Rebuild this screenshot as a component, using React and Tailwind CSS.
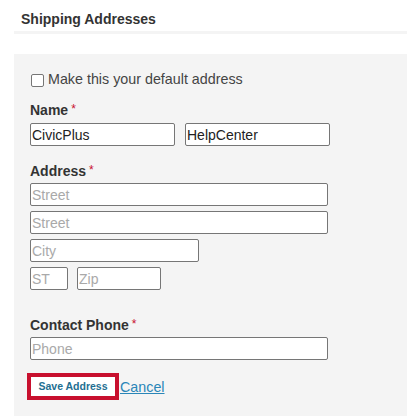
import React from "react";

const inputCls =
  "block h-[23px] rounded-[2px] border border-[#767676] bg-white px-[1px] text-[14px] leading-none text-[#222] placeholder:text-[#a9a9a9] outline-none";

function Label({ children, className = "" }) {
  return (
    <div className={`flex items-start text-[14px] leading-[16px] font-bold text-[#333] ${className}`}>
      <span>{children}</span>
      <span className="ml-[3px] text-[12px] leading-[14px] font-normal text-[#c8102e]">*</span>
    </div>
  );
}

export default function App() {
  return (
    <div
      className="w-[407px] h-[416px] overflow-hidden bg-white"
      style={{ fontFamily: '"Liberation Sans", Arial, sans-serif' }}
    >
      <div className="ml-[14px] pl-[7px] pt-[9px] pb-[2px] border-b-[3px] border-[#f4f4f4]">
        <h2 className="text-[14px] leading-[20px] font-bold text-[#333]">Shipping Addresses</h2>
      </div>

      <div className="ml-[14px] mt-[20px] h-[400px] bg-[#f4f4f4] pl-[16px] pt-[16px]">
        <label className="flex items-center h-[20px] text-[14.3px] text-[#444]">
          <input
            type="checkbox"
            className="ml-px mr-[4px] h-[13px] w-[13px] appearance-none rounded-[2px] border border-[#767676] bg-white"
          />
          Make this your default address
        </label>

        <Label className="mt-[12px]">Name</Label>
        <div className="mt-[5px] flex gap-[10px]">
          <input className={`${inputCls} w-[145px]`} defaultValue="CivicPlus" />
          <input className={`${inputCls} w-[145px]`} defaultValue="HelpCenter" />
        </div>

        <Label className="mt-[17px]">Address</Label>
        <div className="mt-[4px] flex flex-col gap-[5px]">
          <input className={`${inputCls} w-[298px]`} placeholder="Street" />
          <input className={`${inputCls} w-[298px]`} placeholder="Street" />
          <input className={`${inputCls} w-[169px]`} placeholder="City" />
          <div className="flex gap-[9px]">
            <input className={`${inputCls} w-[38px]`} placeholder="ST" />
            <input className={`${inputCls} w-[84px]`} placeholder="Zip" />
          </div>
        </div>

        <Label className="mt-[27px]">Contact Phone</Label>
        <input className={`${inputCls} mt-[4px] w-[298px]`} placeholder="Phone" />

        <div className="mt-[13px] -ml-[3px] flex items-center">
          <button className="h-[27px] w-[92px] border-[4px] border-[#c8102e] bg-white text-[10.5px] leading-[19px] font-bold text-[#1f6f92]">
            Save Address
          </button>
          <a href="#" className="ml-px text-[14.3px] leading-[20px] text-[#2a86b8] underline">
            Cancel
          </a>
        </div>
      </div>
    </div>
  );
}
